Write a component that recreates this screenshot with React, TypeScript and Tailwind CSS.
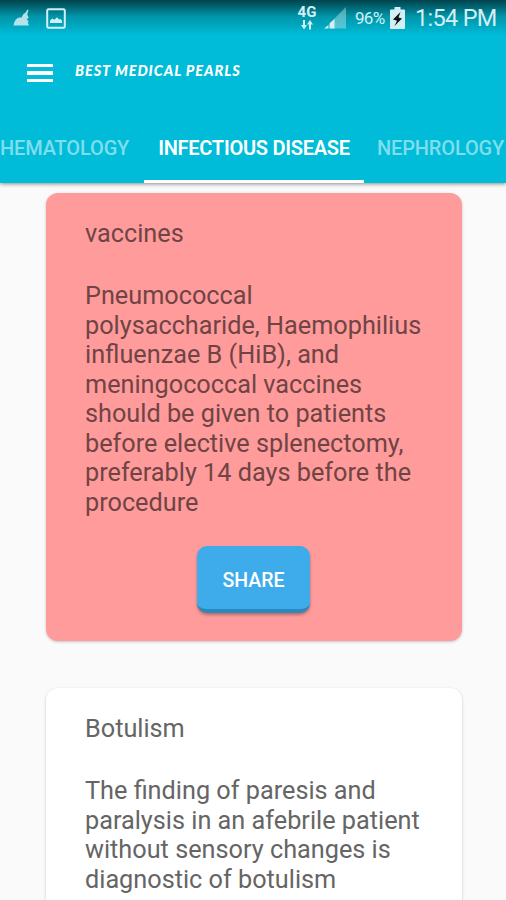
type Pearl = {
  id: number;
  title: string;
  lines: string[];
  highlighted: boolean;
};

const pearls: Pearl[] = [
  {
    id: 1,
    title: "vaccines",
    lines: [
      "Pneumococcal",
      "polysaccharide, Haemophilius",
      "influenzae B (HiB), and",
      "meningococcal vaccines",
      "should be given to patients",
      "before elective splenectomy,",
      "preferably 14 days before the",
      "procedure",
    ],
    highlighted: true,
  },
  {
    id: 2,
    title: "Botulism",
    lines: [
      "The finding of paresis and",
      "paralysis in an afebrile patient",
      "without sensory changes is",
      "diagnostic of botulism",
    ],
    highlighted: false,
  },
];

function StatusBar() {
  return (
    <div className="flex h-[36px] items-center bg-linear-to-b from-[#01434c] via-[#0095a8] via-45% to-[#00bcd9] pl-[13px] text-[#d3eff5]">
      {/* Cleaner app */}
      <svg width="18" height="18" viewBox="0 0 18 18" fill="currentColor" opacity="0.85">
        <path d="M0.500 16.500c0.500-3 1.500-6 4-7.200 1.500-0.800 2.800-0.800 4-0.800l2.200-3.800 1.500-0.700L14.500 0.500l1 0.700-1.300 4.300 1.500 3.200-2 1.600 2 2.200-1 1.200 1.300 2.800z" />
      </svg>
      {/* Screenshot saved */}
      <svg className="ml-[15px]" width="20" height="21" viewBox="0 0 20 21" fill="none">
        <rect x="1.2" y="1.2" width="17.6" height="18.6" rx="1.5" stroke="currentColor" strokeWidth="2" />
        <path d="M4 15v-2.500l2.500-2 2 1.300 2.500-2.600 2 2.300 1.700-0.500 1.300 2V15z" fill="currentColor" />
      </svg>

      <div className="ml-[231px] flex w-[20px] flex-col items-center">
        <span className="text-[15px] font-bold leading-[13px]">4G</span>
        <svg className="mt-[1px]" width="14" height="10" viewBox="0 0 14 10" fill="currentColor">
          <path d="M3 0h2v5h2L4 9.500 1 5h2z M9 9.500h2v-5h2L10 0 7 4.500h2z" />
        </svg>
      </div>
      <svg className="ml-[7px]" width="23" height="22" viewBox="0 0 23 22" fill="currentColor">
        <path d="M6 16 22 0v21.500H6z" opacity="0.4" />
        <path d="M0 21.500 4.500 18v3.500z M5.500 21.500v-5L10.500 12v9.500z" />
      </svg>
      <span className="ml-[8px] w-[31px] whitespace-nowrap text-[17px] leading-[20px] tracking-[-0.7px]">96%</span>
      <svg className="ml-[4px]" width="15" height="22" viewBox="0 0 15 22">
        <path d="M4.500 0h6v2.500H14a1 1 0 0 1 1 1V21a1 1 0 0 1-1 1H1a1 1 0 0 1-1-1V3.500a1 1 0 0 1 1-1h3.500z" fill="currentColor" />
        <path d="M10.500 5 3 12.500l4 1.200L4.500 19 12 11.500l-3.500-1z" fill="#111" />
      </svg>
      <span className="ml-[10px] whitespace-nowrap text-[23.500px] leading-[24px] tracking-[-0.700px]">1:54 PM</span>
    </div>
  );
}

function Header() {
  return (
    <header className="relative z-10 flex h-[183px] flex-col bg-[#00bcd9] shadow-[0_1px_4px_rgba(0,0,0,0.45)]">
      <StatusBar />

      <div className="flex h-[74px] items-center pl-[27px] text-white">
        <button className="flex flex-col gap-[4px]" aria-label="Open menu">
          <span className="h-[3.500px] w-[26px] bg-current" />
          <span className="h-[3.500px] w-[26px] bg-current" />
          <span className="h-[3.500px] w-[26px] bg-current" />
        </button>
        <h1 className="ml-[22px] whitespace-nowrap pb-[4px] font-['Lato'] text-[14.500px] font-black italic leading-[18px] tracking-[0.950px]">
          BEST MEDICAL PEARLS
        </h1>
      </div>

      <nav className="flex flex-1 overflow-hidden whitespace-nowrap text-[20px] font-medium leading-[24px] tracking-[-0.150px] text-[#80deec]">
        <div className="w-[144px] shrink-0 pt-[26px]">HEMATOLOGY</div>
        <div className="w-[220px] shrink-0 border-b-[3px] border-white pt-[26px] text-center font-semibold tracking-[-0.250px] text-white">
          INFECTIOUS DISEASE
        </div>
        <div className="shrink-0 pl-[13px] pt-[26px]">NEPHROLOGY</div>
      </nav>
    </header>
  );
}

function PearlCard({ pearl }: { pearl: Pearl }) {
  return (
    <article
      className={`h-[448px] w-[416px] shrink-0 rounded-[12px] pl-[39px] text-[25.250px] leading-[29.550px] shadow-[0_1px_3px_rgba(0,0,0,0.22)] ${
        pearl.highlighted ? "bg-[#ff9b9b] text-[#704444]" : "bg-white text-[#656565]"
      }`}
    >
      <h2 className="pt-[26px]">{pearl.title}</h2>
      <p className="mt-[32.500px] whitespace-nowrap">
        {pearl.lines.map((line) => (
          <span key={line} className="block">
            {line}
          </span>
        ))}
      </p>
      {pearl.highlighted && (
        <button className="ml-[112px] mt-[29px] flex h-[67px] w-[113px] items-center justify-center rounded-[10px] border-b-[4px] border-[#2c89bd] bg-[#3eaceb] pt-[5px] text-[19.500px] font-medium text-white shadow-[0_2px_3px_rgba(0,0,0,0.3)]">
          SHARE
        </button>
      )}
    </article>
  );
}

export default function App() {
  return (
    <div className="flex h-[900px] w-[506px] flex-col overflow-hidden bg-[#fafafa] font-['Roboto',sans-serif]">
      <Header />
      <main className="flex flex-1 flex-col gap-[47px] overflow-hidden pl-[46px] pt-[10px]">
        {pearls.map((pearl) => (
          <PearlCard key={pearl.id} pearl={pearl} />
        ))}
      </main>
    </div>
  );
}
